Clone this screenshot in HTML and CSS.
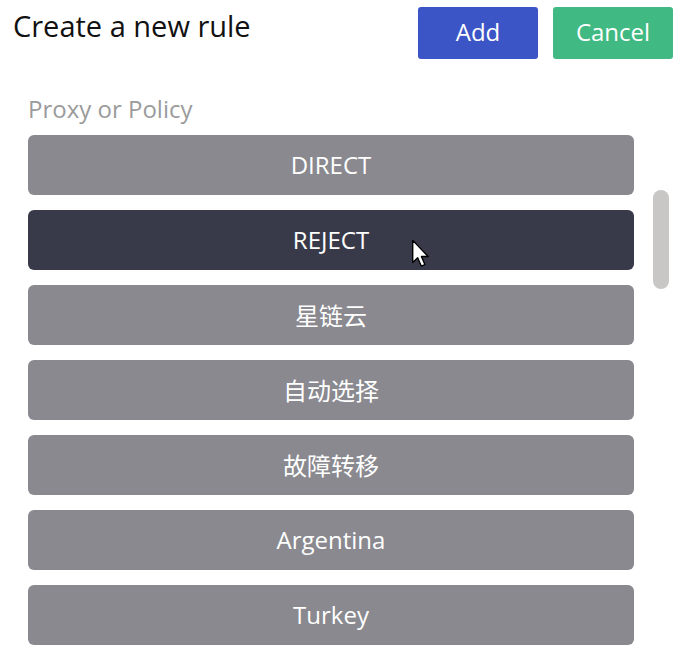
FILE: index.html
```html
<!DOCTYPE html>
<html lang="en">
<head>
<meta charset="utf-8">
<title>Create a new rule</title>
<link rel="stylesheet" href="styles.css">
</head>
<body>
<div class="page">
  <header class="header">
    <h1 class="title">Create a new rule</h1>
    <div class="actions">
      <button class="btn btn-add">Add</button>
      <button class="btn btn-cancel">Cancel</button>
    </div>
  </header>
  <section class="field">
    <div class="label">Proxy or Policy</div>
    <div class="picker">
      <ul class="options">
        <li class="option">DIRECT</li>
        <li class="option selected">REJECT</li>
        <li class="option">星链云</li>
        <li class="option">自动选择</li>
        <li class="option">故障转移</li>
        <li class="option">Argentina</li>
        <li class="option">Turkey</li>
      </ul>
      <div class="track"><div class="thumb"></div></div>
    </div>
  </section>
  <svg class="cursor" width="20" height="29" viewBox="0 0 14 21">
    <path d="M1 1 L1 17 L4.6 13.6 L7.2 19.6 L9.8 18.5 L7.3 12.7 L12.2 12.7 Z" fill="#fff" stroke="#000" stroke-width="1" stroke-linejoin="round"/>
  </svg>
</div>
</body>
</html>
```
FILE: styles.css
```css
* { box-sizing: border-box; }
html, body { margin: 0; padding: 0; background: #fff; }
body {
  font-family: "Open Sans", "Noto Sans CJK SC", sans-serif;
  width: 695px;
  height: 655px;
  overflow: hidden;
}
.page { position: relative; }
.header {
  display: flex;
  justify-content: space-between;
  align-items: flex-start;
  padding: 7px 22px 0 13px;
}
.title {
  margin: 2px 0 0 0;
  font-size: 29px;
  line-height: 34px;
  font-weight: 400;
  color: #111;
}
.actions { display: flex; gap: 15px; }
.btn {
  width: 120px;
  height: 52px;
  border: none;
  border-radius: 3px;
  color: #fff;
  font-family: "Open Sans", sans-serif;
  font-size: 24px;
  padding: 0 0 3px 0;
}
.btn-add { background: #3b55c6; }
.btn-cancel { background: #40b983; }
.field { padding: 34px 0 0 28px; }
.label {
  font-size: 24px;
  line-height: 32px;
  color: #9b9b9b;
}
.picker { display: flex; margin-top: 10px; }
.options {
  list-style: none;
  margin: 0;
  padding: 0;
  width: 606px;
  display: flex;
  flex-direction: column;
  gap: 15px;
}
.option {
  height: 60px;
  border-radius: 6px;
  background: #89898f;
  color: #fff;
  font-size: 24px;
  display: flex;
  align-items: center;
  justify-content: center;
  padding-bottom: 2px;
}
.option.selected { background: #383a4a; }
.track { width: 16px; margin-left: 19px; }
.thumb {
  margin-top: 55px;
  height: 99px;
  border-radius: 8px;
  background: #c9c7c5;
}
.cursor { position: absolute; left: 411px; top: 239px; }
```
